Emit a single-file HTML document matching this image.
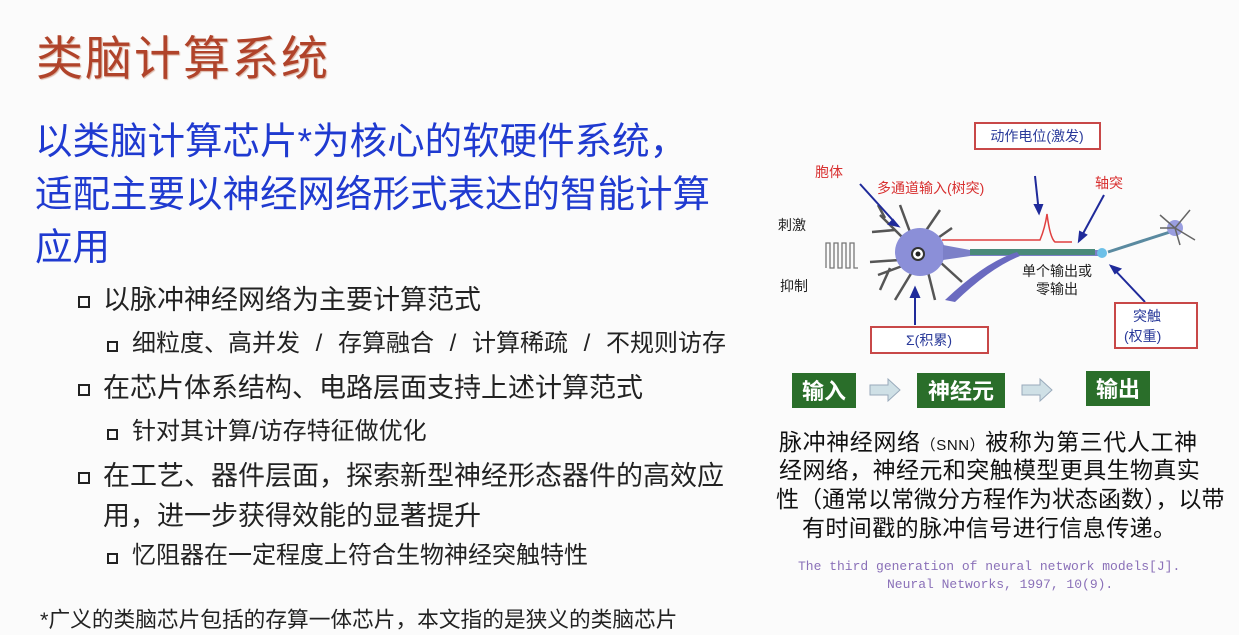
<!DOCTYPE html>
<html><head><meta charset="utf-8"><style>
body{margin:0;width:1239px;height:635px;overflow:hidden;background:#fbfbfb;position:relative;font-family:"Liberation Sans","Noto Sans CJK SC",sans-serif;}
.t{position:absolute;white-space:nowrap;line-height:1;}
.l1{font-size:27px;color:#222;left:103px;}
.l2{font-size:24px;color:#222;left:132px;}
.b1{position:absolute;width:8px;height:8px;border:2px solid #222;left:78px;}
.b2{position:absolute;width:7px;height:7px;border:2px solid #222;left:107px;}
.blue{font-size:37.5px;color:#1f3ad0;left:35px;}
.cap{font-size:23px;color:#111;}
</style></head><body>
<div class="t" style="left:36px;top:35px;font-size:47px;color:#b0432a;letter-spacing:2px;text-shadow:1px 1px 1px #d9b0a0;">类脑计算系统</div>
<div class="t blue" style="top:123px;">以类脑计算芯片*为核心的软硬件系统，</div>
<div class="t blue" style="top:176px;">适配主要以神经网络形式表达的智能计算</div>
<div class="t blue" style="top:229px;">应用</div>

<div class="b1" style="top:296px"></div><div class="t l1" style="top:287px">以脉冲神经网络为主要计算范式</div>
<div class="b2" style="top:341px"></div><div class="t l2" style="top:332px;word-spacing:9px">细粒度、高并发 / 存算融合 / 计算稀疏 / 不规则访存</div>
<div class="b1" style="top:384px"></div><div class="t l1" style="top:375px">在芯片体系结构、电路层面支持上述计算范式</div>
<div class="b2" style="top:429px"></div><div class="t l2" style="top:420px">针对其计算/访存特征做优化</div>
<div class="b1" style="top:472px"></div><div class="t l1" style="top:463px">在工艺、器件层面，探索新型神经形态器件的高效应</div>
<div class="t l1" style="top:503px">用，进一步获得效能的显著提升</div>
<div class="b2" style="top:553px"></div><div class="t l2" style="top:544px">忆阻器在一定程度上符合生物神经突触特性</div>
<div class="t" style="left:40px;top:609px;font-size:21.7px;color:#222;">*广义的类脑芯片包括的存算一体芯片，本文指的是狭义的类脑芯片</div>

<svg style="position:absolute;left:0;top:0" width="1239" height="635">
<g font-family="Liberation Sans,Noto Sans CJK SC,sans-serif">
<rect x="975" y="123" width="125" height="26" fill="#fff" stroke="#c84848" stroke-width="2"/>
<text x="1037" y="141" font-size="14" fill="#2a3a9a" text-anchor="middle">动作电位(激发)</text>
<text x="815" y="177" font-size="14" fill="#d83030">胞体</text>
<text x="877" y="193" font-size="14" fill="#d83030">多通道输入(树突)</text>
<text x="1095" y="188" font-size="14" fill="#d83030">轴突</text>
<text x="778" y="230" font-size="14" fill="#222">刺激</text>
<text x="780" y="291" font-size="14" fill="#222">抑制</text>
<path d="M826 268V243h4v25h4V243h4v25h4V243h4v25h4V243h4v25h4" fill="none" stroke="#777" stroke-width="1.3"/>
<g stroke="#555" stroke-width="2.5" fill="none">
<path d="M905 240L880 215M895 230L872 232M910 232L900 205M925 232L940 210M935 240L952 228M905 265L878 275M900 260L870 262M912 272L895 300M928 272L935 300M940 262L962 282M885 218L878 205M890 268L880 290"/>
</g>
<ellipse cx="920" cy="252" rx="25" ry="24" fill="#8b8fd8"/>
<circle cx="918" cy="254" r="6" fill="#fff" stroke="#333" stroke-width="2"/>
<circle cx="918" cy="254" r="2.5" fill="#222"/>
<path d="M943 245L970 250L1100 250L1100 256L970 256L943 260Z" fill="#7c80c8"/>
<rect x="970" y="249" width="125" height="6" fill="#4a8a7a"/>
<path d="M1017 252Q985 262 945 300L955 302Q990 268 1020 256Z" fill="#6a6ac0"/>
<circle cx="1102" cy="253" r="5" fill="#6cc0e8"/>
<path d="M1108 252L1170 232" stroke="#5a8aa0" stroke-width="3"/>
<circle cx="1175" cy="228" r="8" fill="#9a9ee0"/>
<path d="M1160 215L1175 228L1190 210M1175 228L1195 240M1175 228L1180 245M1175 228L1160 228" stroke="#666" stroke-width="1.5" fill="none"/>
<path d="M942 240L1040 240Q1045 228 1047 214Q1050 238 1055 242L1072 242" fill="none" stroke="#e04040" stroke-width="1.5"/>
<g stroke="#1f2a9a" stroke-width="2" fill="#1f2a9a">
<path d="M860 184L898 226"/><path d="M898 226l-9-2 4-4z"/>
<path d="M1035 176L1039 213"/><path d="M1039 213l-4-8h7z"/>
<path d="M1104 195L1079 241"/><path d="M1079 241l1-9 6 3z"/>
<path d="M915 325L915 288"/><path d="M915 288l-4 9h8z"/>
<path d="M1145 302L1111 266"/><path d="M1111 266l9 3-5 4z"/>
</g>
<text x="1057" y="276" font-size="14" fill="#222" text-anchor="middle">单个输出或</text>
<text x="1057" y="294" font-size="14" fill="#222" text-anchor="middle">零输出</text>
<rect x="871" y="327" width="117" height="26" fill="#fff" stroke="#c84848" stroke-width="2"/>
<text x="929" y="345" font-size="14" fill="#2a3a9a" text-anchor="middle">Σ(积累)</text>
<rect x="1115" y="303" width="82" height="45" fill="#fff" stroke="#c84848" stroke-width="2"/>
<text x="1133" y="321" font-size="14" fill="#2a3a9a">突触</text>
<text x="1124" y="341" font-size="14" fill="#2a3a9a">(权重)</text>
<rect x="792" y="373" width="64" height="35" fill="#2a6e2a"/>
<text x="824" y="399" font-size="22" font-weight="bold" fill="#fff" text-anchor="middle">输入</text>
<rect x="917" y="373" width="88" height="35" fill="#2a6e2a"/>
<text x="961" y="399" font-size="22" font-weight="bold" fill="#fff" text-anchor="middle">神经元</text>
<rect x="1086" y="371" width="64" height="35" fill="#2a6e2a"/>
<text x="1118" y="397" font-size="22" font-weight="bold" fill="#fff" text-anchor="middle">输出</text>
<path d="M870 385h18v-6l12 11-12 11v-6h-18z" fill="#cfe0e6" stroke="#9ab" stroke-width="1"/>
<path d="M1022 385h18v-6l12 11-12 11v-6h-18z" fill="#cfe0e6" stroke="#9ab" stroke-width="1"/>
</g>
</svg>

<div class="t cap" style="left:779px;top:431px;letter-spacing:0.6px">脉冲神经网络<span style="font-size:15px">（SNN）</span>被称为第三代人工神</div>
<div class="t cap" style="left:779px;top:459px;letter-spacing:0.4px">经网络，神经元和突触模型更具生物真实</div>
<div class="t cap" style="left:776px;top:488px;">性（通常以常微分方程作为状态函数），以带</div>
<div class="t cap" style="left:802px;top:517px;letter-spacing:0.4px">有时间戳的脉冲信号进行信息传递。</div>
<div class="t" style="left:798px;top:560px;font-size:13px;font-family:'Liberation Mono',monospace;color:#8a70b8;">The third generation of neural network models[J].</div>
<div class="t" style="left:887px;top:578px;font-size:13px;font-family:'Liberation Mono',monospace;color:#8a70b8;">Neural Networks, 1997, 10(9).</div>
</body></html>
